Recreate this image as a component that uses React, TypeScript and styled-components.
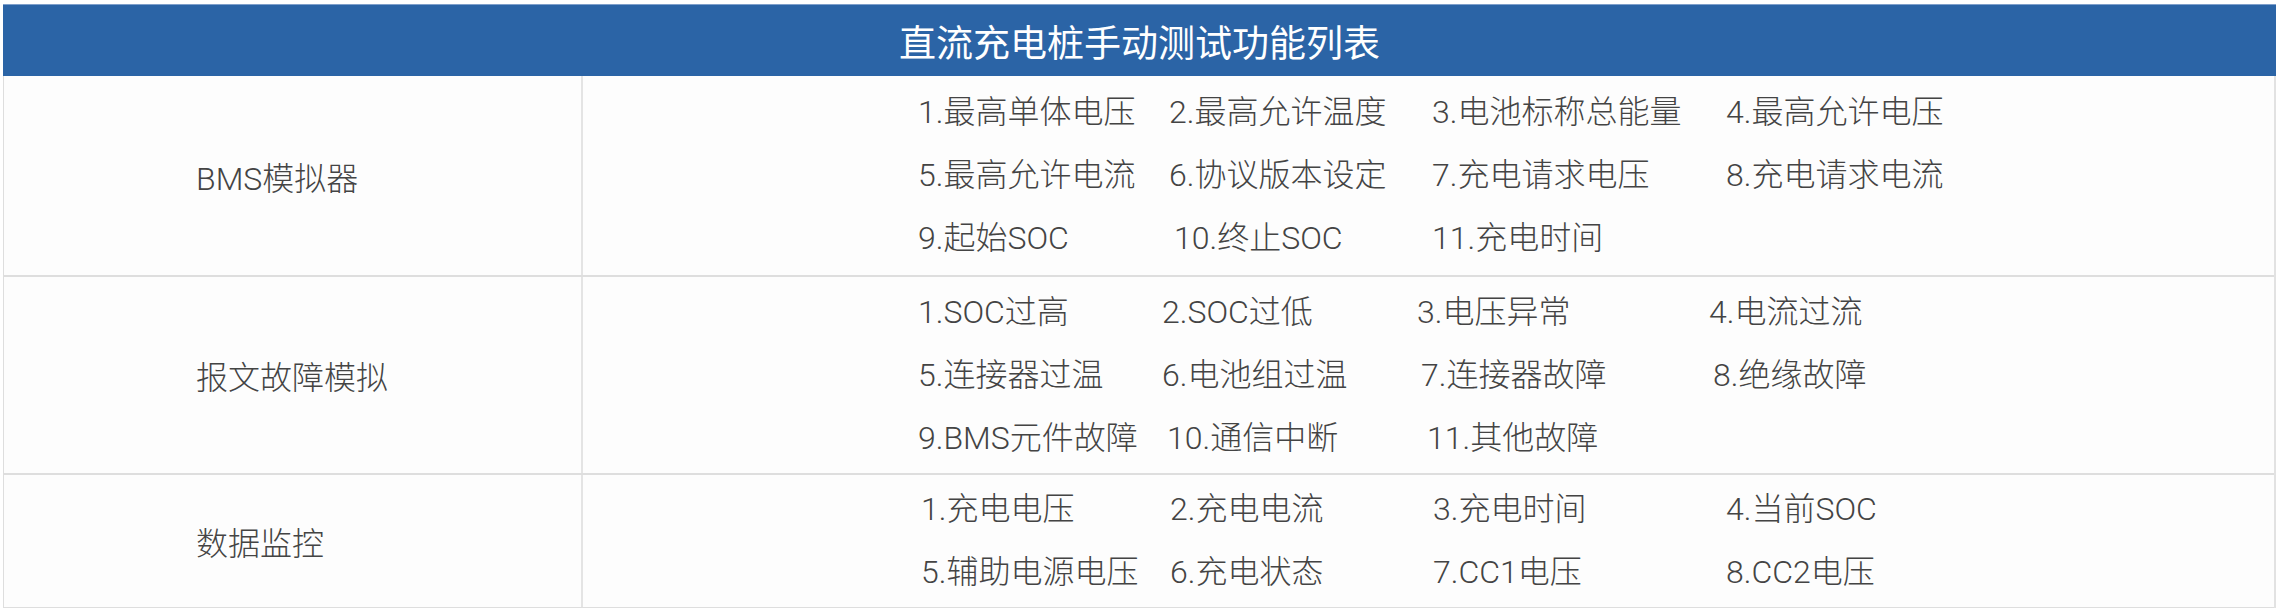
import styled, { createGlobalStyle } from "styled-components";

const GlobalStyle = createGlobalStyle`
  body {
    margin: 0;
    background: #ffffff;
    font-family: "Noto Sans CJK SC", "Noto Sans", sans-serif;
  }
`;

const Table = styled.div`
  width: 2273px;
  margin: 4px 2px 0 3px;
`;

const Caption = styled.div`
  height: 72px;
  display: flex;
  align-items: center;
  justify-content: center;
  background-color: #2b64a6;
  border-top: 1px solid #7e9fcb;
  box-sizing: border-box;
  color: #ffffff;
  font-size: 37px;
  font-weight: 400;
`;

const Body = styled.div`
  background: #fdfdfd;
  border-left: 1px solid #dedede;
  border-right: 2px solid #e2e2e2;
`;

const Row = styled.div<{ $height: number }>`
  display: grid;
  grid-template-columns: 579px 1fr;
  height: ${(p) => p.$height}px;
  border-bottom: 2px solid #dedede;
`;

const Label = styled.div`
  display: flex;
  align-items: center;
  padding-left: 192px;
  border-right: 2px solid #e4e4e4;
  color: #444444;
  font-family: "Roboto", "Noto Sans CJK SC", sans-serif;
  font-size: 32px;
  font-weight: 300;
`;

const Items = styled.div<{ $cols: string; $indent: number }>`
  display: grid;
  grid-template-columns: ${(p) => p.$cols};
  align-content: center;
  padding-left: ${(p) => p.$indent}px;
  color: #444444;
  font-family: "Roboto", "Noto Sans CJK SC", sans-serif;
  font-size: 32px;
  font-weight: 300;
  line-height: 63px;
`;

const Item = styled.span<{ $dx?: number }>`
  white-space: nowrap;
  padding-left: ${(p) => p.$dx ?? 0}px;
`;

interface IItem {
  text: string;
  dx?: number;
}

interface ISection {
  label: string;
  height: number;
  cols: string;
  indent: number;
  items: IItem[];
}

const sections: ISection[] = [
  {
    label: "BMS模拟器",
    height: 199,
    cols: "251px 263px 294px auto",
    indent: 335,
    items: [
      { text: "1.最高单体电压" },
      { text: "2.最高允许温度" },
      { text: "3.电池标称总能量" },
      { text: "4.最高允许电压" },
      { text: "5.最高允许电流" },
      { text: "6.协议版本设定" },
      { text: "7.充电请求电压" },
      { text: "8.充电请求电流" },
      { text: "9.起始SOC" },
      { text: "10.终止SOC", dx: 5 },
      { text: "11.充电时间", dx: -5 },
    ],
  },
  {
    label: "报文故障模拟",
    height: 196,
    cols: "244px 255px 292px auto",
    indent: 335,
    items: [
      { text: "1.SOC过高" },
      { text: "2.SOC过低" },
      { text: "3.电压异常" },
      { text: "4.电流过流" },
      { text: "5.连接器过温" },
      { text: "6.电池组过温", dx: -4 },
      { text: "7.连接器故障", dx: 4 },
      { text: "8.绝缘故障", dx: 4 },
      { text: "9.BMS元件故障" },
      { text: "10.通信中断", dx: 5 },
      { text: "11.其他故障", dx: 10 },
    ],
  },
  {
    label: "数据监控",
    height: 132,
    cols: "249px 263px 293px auto",
    indent: 338,
    items: [
      { text: "1.充电电压" },
      { text: "2.充电电流" },
      { text: "3.充电时间" },
      { text: "4.当前SOC" },
      { text: "5.辅助电源电压" },
      { text: "6.充电状态" },
      { text: "7.CC1电压" },
      { text: "8.CC2电压" },
    ],
  },
];

function App() {
  return (
    <>
      <GlobalStyle />
      <Table>
        <Caption>直流充电桩手动测试功能列表</Caption>
        <Body>
          {sections.map((s) => (
            <Row key={s.label} $height={s.height}>
              <Label>{s.label}</Label>
              <Items $cols={s.cols} $indent={s.indent}>
                {s.items.map((it) => (
                  <Item key={it.text} $dx={it.dx}>
                    {it.text}
                  </Item>
                ))}
              </Items>
            </Row>
          ))}
        </Body>
      </Table>
    </>
  );
}

export default App;
